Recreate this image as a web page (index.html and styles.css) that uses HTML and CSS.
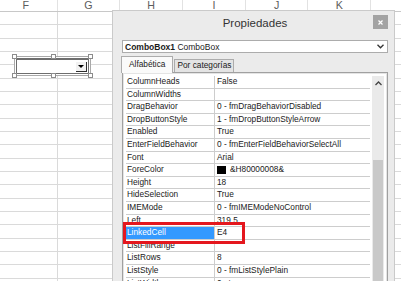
FILE: index.html
```html
<!DOCTYPE html>
<html lang="es">
<head>
  <meta charset="UTF-8" />
  <title>Propiedades - ComboBox1</title>
  <link rel="stylesheet" href="styles.css">
</head>
<body>
  <div class="sheet">
    <div class="col-heads">
      <div class="col-head">F</div>
      <div class="col-head">G</div>
      <div class="col-head">H</div>
      <div class="col-head">I</div>
      <div class="col-head">J</div>
      <div class="col-head">K</div>
      <div class="col-head"></div>
    </div>
    <div class="cells"></div>

    <div class="combo-ctl">
      <div class="combo-box">
        <div class="combo-btn"><span class="tri"></span></div>
      </div>
      <span class="handle h-tl"></span>
      <span class="handle h-tm"></span>
      <span class="handle h-tr"></span>
      <span class="handle h-bl"></span>
      <span class="handle h-bm"></span>
      <span class="handle h-br"></span>
    </div>
  </div>

  <div class="props">
    <div class="props-title">
      <span></span>
      <span class="title-text">Propiedades</span>
      <span class="close-btn">
        <svg width="5" height="5" viewBox="0 0 5 5"><path d="M0.5 0.5 L4.5 4.5 M4.5 0.5 L0.5 4.5" stroke="#fff" stroke-width="1.2"/></svg>
      </span>
    </div>

    <div class="obj-select">
      <span><b>ComboBox1</b> ComboBox</span>
      <svg width="7" height="5" viewBox="0 0 7 5"><path d="M0.5 0.8 L3.5 3.8 L6.5 0.8" fill="none" stroke="#333" stroke-width="1.3"/></svg>
    </div>

    <div class="tabs">
      <span class="tab active">Alfabética</span>
      <span class="tab">Por categorías</span>
    </div>

    <div class="grid">
      <div class="rows">
        <div class="row"><span class="name">ColumnHeads</span><span class="val">False</span></div>
        <div class="row"><span class="name">ColumnWidths</span><span class="val"></span></div>
        <div class="row"><span class="name">DragBehavior</span><span class="val">0 - fmDragBehaviorDisabled</span></div>
        <div class="row"><span class="name">DropButtonStyle</span><span class="val">1 - fmDropButtonStyleArrow</span></div>
        <div class="row"><span class="name">Enabled</span><span class="val">True</span></div>
        <div class="row"><span class="name">EnterFieldBehavior</span><span class="val">0 - fmEnterFieldBehaviorSelectAll</span></div>
        <div class="row"><span class="name">Font</span><span class="val">Arial</span></div>
        <div class="row"><span class="name">ForeColor</span><span class="val"><span class="swatch"></span>&amp;H80000008&amp;</span></div>
        <div class="row"><span class="name">Height</span><span class="val">18</span></div>
        <div class="row"><span class="name">HideSelection</span><span class="val">True</span></div>
        <div class="row"><span class="name">IMEMode</span><span class="val">0 - fmIMEModeNoControl</span></div>
        <div class="row"><span class="name">Left</span><span class="val">319.5</span></div>
        <div class="row selected"><span class="name">LinkedCell</span><span class="val">E4</span></div>
        <div class="row"><span class="name">ListFillRange</span><span class="val"></span></div>
        <div class="row"><span class="name">ListRows</span><span class="val">8</span></div>
        <div class="row"><span class="name">ListStyle</span><span class="val">0 - fmListStylePlain</span></div>
        <div class="row"><span class="name">ListWidth</span><span class="val">0 pt</span></div>
      </div>
      <div class="scrollbar">
        <div class="scroll-up">
          <svg width="7" height="5" viewBox="0 0 7 5"><path d="M0.5 4 L3.5 1 L6.5 4" fill="none" stroke="#444" stroke-width="1.3"/></svg>
        </div>
        <div class="thumb"></div>
      </div>
    </div>

    <div class="mark"></div>
  </div>
</body>
</html>
```

FILE: styles.css
```css
* {
  box-sizing: border-box;
}

body {
  margin: 0;
  width: 401px;
  height: 281px;
  overflow: hidden;
  position: relative;
  background: #fff;
  font-family: 'Liberation Sans', Arial, sans-serif;
  color: #1a1a1a;
}

/* excel sheet behind the dialog */

.sheet {
  width: 401px;
  height: 281px;
  overflow: hidden;
  position: relative;
}

.col-heads {
  display: flex;
  height: 12px;
  margin-left: -5px;
  border-bottom: 1px solid #c8c8c8;
}

.col-head {
  flex: 0 0 62.7px;
  border-right: 1px solid #e2e2e2;
  text-align: center;
  font-size: 10.7px;
  line-height: 11px;
  color: #5c5c5c;
}

.cells {
  height: 270px;
  background-image:
    repeating-linear-gradient(to bottom, transparent 0 12.33px, #dadada 12.33px 13.33px),
    repeating-linear-gradient(to right, transparent 0 61.7px, #dadada 61.7px 62.7px);
  background-position: 0 0, -5px 0;
}

.combo-ctl {
  position: absolute;
  left: 14px;
  top: 56px;
  width: 77px;
  height: 20px;
  border: 1px solid #a9a9a9;
  padding: 1px;
  background: #fff;
}

.combo-box {
  height: 100%;
  border: 1px solid #6e6e6e;
  border-top-width: 2px;
  display: flex;
  justify-content: flex-end;
  padding: 2px 1px 1px 0;
}

.combo-btn {
  width: 11px;
  background: #f2f2f2;
  border-right: 1px solid #2e2e2e;
  border-bottom: 1px solid #2e2e2e;
  display: flex;
  align-items: center;
  justify-content: center;
}

.tri {
  width: 0;
  height: 0;
  border-left: 3px solid transparent;
  border-right: 3px solid transparent;
  border-top: 3px solid #000;
}

.handle {
  position: absolute;
  width: 5px;
  height: 5px;
  background: #fff;
  border: 1px solid #8c8c8c;
}

.h-tl { left: -3px; top: -3px; }
.h-tm { left: 36px; top: -3px; }
.h-tr { right: -3px; top: -3px; }
.h-bl { left: -3px; bottom: -3px; }
.h-bm { left: 36px; bottom: -3px; }
.h-br { right: -3px; bottom: -3px; }

/* properties window */

.props {
  position: absolute;
  left: 112px;
  top: 10px;
  width: 283px;
  height: 290px;
  background: #ebebeb;
  border: 1px solid #cacaca;
  padding: 0 6px 0 9px;
  font-size: 8.3px;
}

.props-title {
  display: grid;
  grid-template-columns: 1fr auto 1fr;
  align-items: start;
  height: 29px;
}

.title-text {
  font-size: 11.5px;
  line-height: 24px;
  color: #333;
}

.close-btn {
  justify-self: end;
  margin-top: 4px;
  width: 15px;
  height: 14px;
  background: #a3a3a3;
  display: flex;
  align-items: center;
  justify-content: center;
}

.obj-select {
  height: 13px;
  background: #fff;
  border: 1px solid #acacac;
  padding: 0 3px 0 2px;
  font-size: 8.5px;
  line-height: 12px;
  display: flex;
  justify-content: space-between;
  align-items: center;
}

.tabs {
  display: flex;
  align-items: flex-end;
  height: 19px;
}

.tab {
  height: 13px;
  padding: 0 2px;
  line-height: 10px;
  background: #e4e4e4;
  border: 1px solid #acacac;
  border-bottom: none;
  margin-left: 1px;
}

.tab.active {
  height: 17px;
  margin-left: -1px;
  margin-bottom: -1px;
  padding: 0 7px;
  line-height: 14px;
  background: #fafafa;
  position: relative;
}

.grid {
  display: flex;
  height: 220px;
  background: #fff;
  border: 1px solid #a0a0a0;
  box-shadow: inset 0 0 0 1px #e4e4e4;
  padding: 3px 3px 0 3px;
}

.rows {
  width: 244px;
}

.row {
  display: flex;
  height: 12.6px;
  line-height: 11.6px;
  border-bottom: 1px solid #cdcdcd;
  white-space: nowrap;
}

.name {
  flex: 0 0 89px;
  padding-left: 1px;
  border-right: 1px solid #cdcdcd;
  overflow: hidden;
}

.val {
  padding-left: 2px;
  display: flex;
  align-items: center;
}

.swatch {
  width: 9px;
  height: 8px;
  background: #000;
  margin-right: 4px;
}

.row.selected .name {
  background: #3399ff;
  color: #fff;
}

.scrollbar {
  width: 12px;
  margin-left: 2px;
  background: #eaeaea;
}

.scroll-up {
  height: 14px;
  display: flex;
  align-items: center;
  justify-content: center;
}

.thumb {
  margin: 70px 1px 0;
  height: 140px;
  background: #c9c9c9;
}

.mark {
  position: absolute;
  left: 10px;
  top: 211px;
  width: 122px;
  height: 22px;
  border: 3px solid #e4171e;
}
```
